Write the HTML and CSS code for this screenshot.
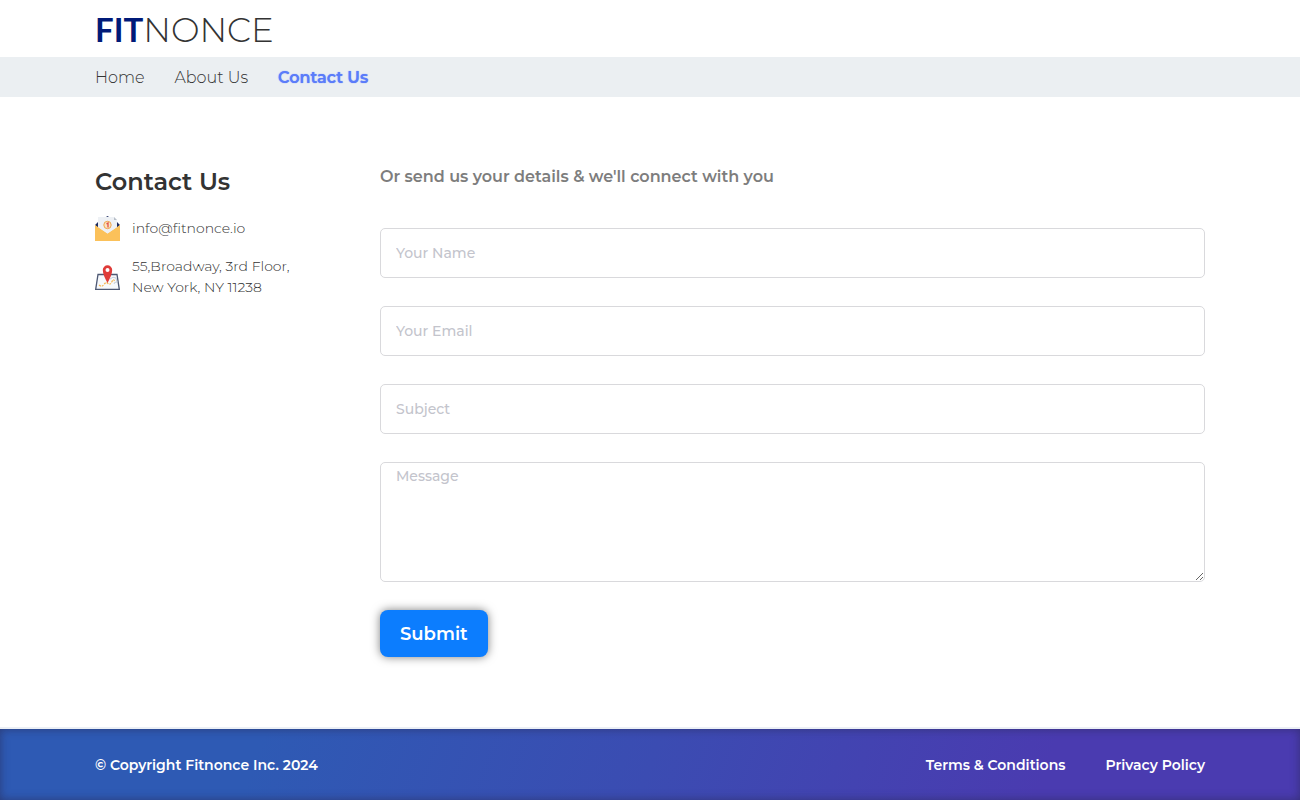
FILE: index.html
```html
<!DOCTYPE html>
<html lang="en">
<head>
    <meta charset="UTF-8">
    <meta name="viewport" content="width=device-width, initial-scale=1.0">
    <title>Contact Us | Fitnonce</title>
    <link rel="stylesheet" href="styles.css">
</head>
<body>
    <header>
        <div class="container">
            <a href="#" class="logo"><b>FIT</b><span>NONCE</span></a>
        </div>
        <nav class="navbar">
            <div class="container nav-links">
                <a href="#">Home</a>
                <a href="#">About Us</a>
                <a href="#" class="active">Contact Us</a>
            </div>
        </nav>
    </header>

    <main class="container contact">
        <section class="contact-info">
            <h1>Contact Us</h1>
            <div class="info-row">
                <svg class="icon" viewBox="0 0 25 25" aria-hidden="true">
                    <path d="M0 9l3-3v6zM25 9l-3-3v6z" fill="#1d2c60"/>
                    <path d="M11 1l1.500-1L14 1z" fill="#1d2c60"/>
                    <path d="M3 1h16l3 3v9l-9.500 6L3 13z" fill="#eef1f5"/>
                    <path d="M19 1v3h3z" fill="#b8bfc9"/>
                    <path d="M0 9l12.500 8.500L25 9v16H0z" fill="#fbc15a"/>
                    <path d="M3 10v1l9.500 6.500L22 11v-1z" fill="#eef1f5"/>
                    <circle cx="12.500" cy="9" r="3.700" fill="#fbe3c0" stroke="#f0a64c"/>
                    <path d="M11.500 8l1.500-1v4.500" fill="none" stroke="#e0524a" stroke-width="1.300"/>
                </svg>
                <a href="mailto:info@fitnonce.io">info@fitnonce.io</a>
            </div>
            <div class="info-row">
                <svg class="icon" viewBox="0 0 25 25" aria-hidden="true">
                    <path d="M3 9.500h19l2.300 14.800H.7z" fill="#f7f9fc" stroke="#4d5873" stroke-width="1.300"/>
                    <path d="M4 20q3 2.500 5-.5t4-1 4-2 2.500 1" fill="none" stroke="#f5b754" stroke-width="1.200" stroke-dasharray="2 1"/>
                    <path d="M15 14q3-3 6-1l1 4q-3 0-3 2" fill="none" stroke="#c7d0dc"/>
                    <path d="M12.500 18C10 13 7.800 9 7.800 5a4.700 4.700 0 0 1 9.400 0c0 4-2.200 8-4.700 13z" fill="#df3b38"/>
                    <circle cx="12.500" cy="5" r="2" fill="#fff"/>
                </svg>
                <address>55,Broadway, 3rd Floor,<br>New York, NY 11238</address>
            </div>
        </section>

        <section class="contact-form">
            <h2>Or send us your details &amp; we'll connect with you</h2>
            <form>
                <input type="text" name="name" placeholder="Your Name" aria-label="Your Name">
                <input type="email" name="email" placeholder="Your Email" aria-label="Your Email">
                <input type="text" name="subject" placeholder="Subject" aria-label="Subject">
                <textarea name="message" placeholder="Message" aria-label="Message"></textarea>
                <button type="submit">Submit</button>
            </form>
        </section>
    </main>

    <footer>
        <div class="container footer-row">
            <span>© Copyright Fitnonce Inc. 2024</span>
            <div class="footer-links">
                <a href="#">Terms &amp; Conditions</a>
                <a href="#">Privacy Policy</a>
            </div>
        </div>
    </footer>
</body>
</html>
```
FILE: styles.css
```css
* {
    box-sizing: border-box;
}

body {
    margin: 0;
    min-height: 100vh;
    display: flex;
    flex-direction: column;
    background: #fff;
    color: #333;
    font-family: Montserrat, Inter, sans-serif;
    font-size: 14px;
}

a {
    color: inherit;
    text-decoration: none;
}

.container {
    width: calc(100% - 30px);
    max-width: 1110px;
    margin: 0 auto;
}

/* header */
.logo {
    display: flex;
    height: 57px;
    align-items: baseline;
    line-height: 58px;
    font-size: 34px;
    font-weight: 300;
    color: #333;
}

.logo b {
    color: #001a78;
    font-family: Lato, sans-serif;
    font-size: 33px;
    font-weight: 700;
}

.navbar {
    background: #ebeff2;
}

.nav-links {
    display: flex;
    align-items: center;
    gap: 30px;
    height: 40px;
    font-size: 16px;
    font-weight: 300;
}

.nav-links .active {
    color: #5b7cfa;
    font-weight: 600;
    text-shadow: 0 0 1px #5b7cfa;
}

/* contact */
.contact {
    flex: 1;
    display: flex;
    gap: 30px;
    padding: 64px 0 70px;
}

.contact-info {
    flex: 0 0 255px;
    font-weight: 300;
}

.contact-info h1 {
    margin: 0 0 14px;
    font-size: 24px;
    line-height: 41px;
    font-weight: 600;
}

.info-row {
    display: flex;
    align-items: center;
    gap: 12px;
    margin-bottom: 15px;
    line-height: 21px;
}

.icon {
    width: 25px;
    height: 25px;
}

address {
    font-style: normal;
}

.contact-form {
    flex: 1;
}

.contact-form h2 {
    margin: 0 0 35px;
    font-size: 16px;
    line-height: 32px;
    font-weight: 600;
    color: #7d7d7d;
}

form {
    display: flex;
    flex-direction: column;
    align-items: flex-start;
    gap: 28px;
}

input,
textarea {
    display: block;
    width: 100%;
    height: 50px;
    padding: 0 15px;
    border: 1px solid #d9d9dc;
    border-radius: 5px;
    background: #fff;
    color: #333;
    font: inherit;
    font-weight: 500;
}

textarea {
    height: 120px;
    padding-top: 4px;
    resize: vertical;
}

input::placeholder,
textarea::placeholder {
    color: #c3c4cc;
}

button {
    height: 47px;
    padding: 0 20px;
    border: 0;
    border-radius: 8px;
    background: #0c7dfe;
    box-shadow: 0 0 10px rgba(0, 0, 0, 0.5);
    color: #fff;
    font: inherit;
    font-size: 18px;
    font-weight: 600;
    cursor: pointer;
}

/* footer */
footer {
    border-top: 2px solid #ebeff5;
    background: linear-gradient(110deg, #2e5ab4 20%, #3b4cb2 50%, #4a3bb0 80%);
    background-clip: padding-box;
    box-shadow: inset 0 0 10px rgba(40, 40, 80, 0.6);
    color: #fff;
    font-weight: 600;
}

.footer-row {
    display: flex;
    justify-content: space-between;
    align-items: center;
    height: 71px;
}

.footer-links {
    display: flex;
    gap: 40px;
}
```
